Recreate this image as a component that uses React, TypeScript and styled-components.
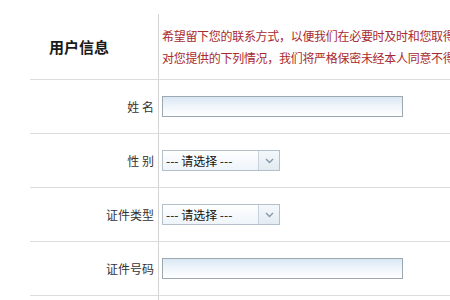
import { createGlobalStyle, styled } from "styled-components";

const GlobalStyle = createGlobalStyle`
  html, body {
    margin: 0;
    padding: 0;
    background: #ffffff;
    overflow: hidden;
  }
  body {
    font-family: "Noto Sans CJK SC", "Noto Sans", sans-serif;
  }
`;

const Table = styled.div`
  width: 450px;
  height: 300px;
  padding-top: 14px;
  box-sizing: border-box;
  overflow: hidden;
`;

const Row = styled.div<{ $height: number }>`
  margin-left: 30px;
  display: grid;
  grid-template-columns: 129px 1fr;
  height: ${(p) => p.$height}px;
  border-bottom: 1px solid #dcdcdc;
`;

const LeftCell = styled.div<{ $title?: boolean }>`
  border-right: 1px solid #d4d4d4;
  display: flex;
  align-items: center;
  justify-content: ${(p) => (p.$title ? "center" : "flex-end")};
  padding-right: ${(p) => (p.$title ? "30px" : "4px")};
  font-size: ${(p) => (p.$title ? "15px" : "12px")};
  font-weight: ${(p) => (p.$title ? 700 : 400)};
  color: ${(p) => (p.$title ? "#1a1a1a" : "#333333")};
  white-space: nowrap;
`;

const RightCell = styled.div`
  display: flex;
  flex-direction: column;
  justify-content: center;
  padding-left: 3px;
  min-width: 0;
  overflow: hidden;
`;

const Notice = styled.p`
  margin: 0;
  font-size: 12px;
  letter-spacing: -0.3px;
  line-height: 22px;
  color: #a82a2e;
  white-space: nowrap;
`;

const TextInput = styled.input`
  width: 241px;
  height: 21px;
  box-sizing: border-box;
  border: 1px solid #9ea8b1;
  background: linear-gradient(to bottom, #d9e7f4 0%, #eef4fa 45%, #ffffff 100%);
  outline: none;
  padding: 0 4px;
`;

const SelectBox = styled.div`
  width: 118px;
  height: 21px;
  box-sizing: border-box;
  border: 1px solid #b3c0cc;
  background: linear-gradient(to bottom, #ffffff 0%, #eef4fa 100%);
  display: flex;
  align-items: stretch;
`;

const SelectText = styled.span`
  flex: 1;
  display: flex;
  align-items: center;
  padding-left: 3px;
  font-size: 12px;
  color: #111111;
  white-space: nowrap;
`;

const ArrowBox = styled.span`
  width: 20px;
  border-left: 1px solid #c7d2dc;
  display: flex;
  align-items: center;
  justify-content: center;
  background: linear-gradient(to bottom, #f4f8fb 0%, #e3ebf2 100%);
`;

function Chevron() {
  return (
    <svg width="9" height="6" viewBox="0 0 9 6">
      <path d="M1 1 L4.5 4.5 L8 1" fill="none" stroke="#8597a8" strokeWidth="1.4" />
    </svg>
  );
}

function Select() {
  return (
    <SelectBox>
      <SelectText>--- 请选择 ---</SelectText>
      <ArrowBox>
        <Chevron />
      </ArrowBox>
    </SelectBox>
  );
}

export default function App() {
  return (
    <>
      <GlobalStyle />
      <Table>
        <Row $height={65}>
          <LeftCell $title>用户信息</LeftCell>
          <RightCell>
            <Notice>希望留下您的联系方式，以便我们在必要时及时和您取得</Notice>
            <Notice>对您提供的下列情况，我们将严格保密未经本人同意不得</Notice>
          </RightCell>
        </Row>
        <Row $height={53}>
          <LeftCell>姓 名</LeftCell>
          <RightCell>
            <TextInput type="text" />
          </RightCell>
        </Row>
        <Row $height={53}>
          <LeftCell>性 别</LeftCell>
          <RightCell>
            <Select />
          </RightCell>
        </Row>
        <Row $height={53}>
          <LeftCell>证件类型</LeftCell>
          <RightCell>
            <Select />
          </RightCell>
        </Row>
        <Row $height={53}>
          <LeftCell>证件号码</LeftCell>
          <RightCell>
            <TextInput type="text" />
          </RightCell>
        </Row>
        <Row $height={53}>
          <LeftCell />
          <RightCell />
        </Row>
      </Table>
    </>
  );
}
